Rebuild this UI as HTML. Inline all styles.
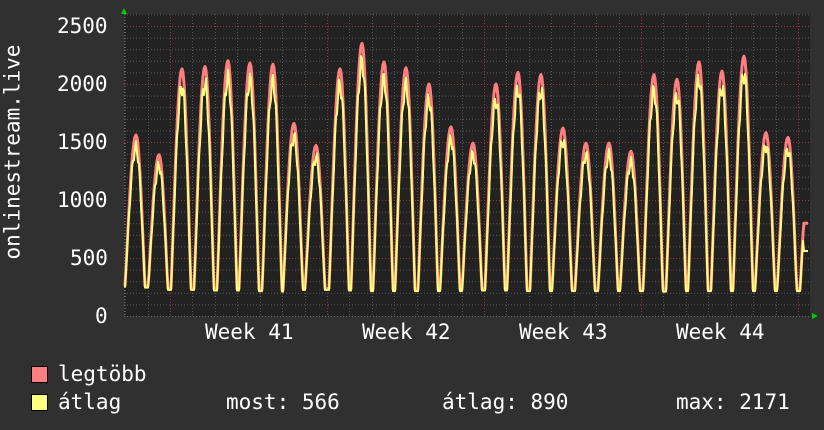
<!DOCTYPE html>
<html><head><meta charset="utf-8"><style>
html,body{margin:0;padding:0;background:#303030;}
body{width:824px;height:430px;overflow:hidden;position:relative;font-family:"DejaVu Sans Mono","Liberation Mono",monospace;color:#fff;}
.t{position:absolute;font-size:21px;line-height:1;white-space:pre;}
.sq{position:absolute;width:15px;height:15px;border:1px solid #000;}
</style></head><body>
<svg id="g" width="824" height="430" style="position:absolute;left:0;top:0">
<rect x="124" y="14" width="686" height="302" fill="#222"/>
<g id="grid"></g>
<path id="red" fill="none" stroke="#ff7f7f" stroke-width="3" stroke-linejoin="round"/>
<path id="yel" fill="none" stroke="#ffff7f" stroke-width="2" stroke-linejoin="round"/>
<polygon points="121,14 127,14 124,8" fill="#0c0"/>
<polygon points="812,313 812,319 818,316" fill="#0c0"/>
</svg>
<div class="t" style="left:57px;top:16px">2500</div>
<div class="t" style="left:57px;top:74px">2000</div>
<div class="t" style="left:57px;top:132px">1500</div>
<div class="t" style="left:57px;top:190px">1000</div>
<div class="t" style="left:70px;top:248px">500</div>
<div class="t" style="left:95px;top:306px">0</div>
<div class="t" style="left:205px;top:322px">Week 41</div>
<div class="t" style="left:362px;top:322px">Week 42</div>
<div class="t" style="left:519px;top:322px">Week 43</div>
<div class="t" style="left:676px;top:322px">Week 44</div>
<div class="t" style="left:-82px;top:154px;transform:rotate(-90deg);transform-origin:center;width:190px;text-align:center">onlinestream.live</div>
<div class="sq" style="left:31px;top:366px;background:#ff7f7f"></div>
<div class="sq" style="left:31px;top:394px;background:#ffff7f"></div>
<div class="t" style="left:58px;top:364px">legtöbb</div>
<div class="t" style="left:58px;top:392px">átlag</div>
<div class="t" style="left:226px;top:392px">most: 566</div>
<div class="t" style="left:442px;top:392px">átlag: 890</div>
<div class="t" style="left:676px;top:392px">max: 2171</div>
<script>
(function(){
var ns="http://www.w3.org/2000/svg",g=document.getElementById("grid");
function line(x1,y1,x2,y2,c){var l=document.createElementNS(ns,"line");l.setAttribute("x1",x1);l.setAttribute("y1",y1);l.setAttribute("x2",x2);l.setAttribute("y2",y2);l.setAttribute("stroke",c);l.setAttribute("stroke-width",1);l.setAttribute("stroke-dasharray","1,2");g.appendChild(l);}
for(var v=100;v<=2600;v+=100){var y=316-v*0.116;if(y<14)break;line(124,y+.5,810,y+.5,v%500==0?"#8a3a3a":"#555");}
for(var k=-6;k<40;k++){var x=170+k*22.43;if(x<125||x>809)continue;line(Math.round(x)+.5,14,Math.round(x)+.5,316,(k%7==0)?"#8a3a3a":"#555");}
line(124,316.5,810,316.5,"#666");line(124.5,14,124.5,316,"#666");
var peaks=[[136,1560],[159,1390],[182,2130],[205,2150],[228,2200],[250,2180],[273,2170],[294,1660],[316,1470],[340,2130],[362,2350],[384,2190],[406,2140],[429,2000],[451,1630],[473,1490],[496,2000],[518,2100],[541,2080],[563,1620],[586,1490],[609,1490],[631,1420],[654,2080],[677,2040],[699,2190],[722,2110],[744,2240],[766,1580],[788,1540],[811,1500]];
var tr=[260,230,240,230,235,230,200,225,240,235,230,230,230,230,230,230,235,230,230,225,230,230,230,200,225,230,230,230,230,200,230];
function val(x,m){var best=0;for(var i=0;i<peaks.length;i++){var d=x-peaks[i][0];if(Math.abs(d)>15)continue;var w=d<0?11:9;var f=Math.max(0,Math.cos(Math.min(Math.abs(d)/w,1)*Math.PI/2));f=Math.pow(f,1.1);var t=tr[i]||230;var p=peaks[i][1]*m;var vv=t+(p-t)*f;if(vv>best)best=vv;}
return best||230;}
var r="",yl="";
for(var x=125;x<=808;x++){var a=val(x,1),b=val(x,0.93)*(1-0.04*Math.sin(x*1.7));
if(x>=804){a=Math.min(a,800);}
var ya=316-a*0.116,yb=316-Math.min(b,a-15,560)*0.116;
if(x<804)yb=316-Math.min(b,a-15)*0.116;
r+=(x==125?"M":"L")+x+","+ya.toFixed(1);yl+=(x==125?"M":"L")+x+","+yb.toFixed(1);}
document.getElementById("red").setAttribute("d",r);document.getElementById("yel").setAttribute("d",yl);
})();
</script>
</body></html>
